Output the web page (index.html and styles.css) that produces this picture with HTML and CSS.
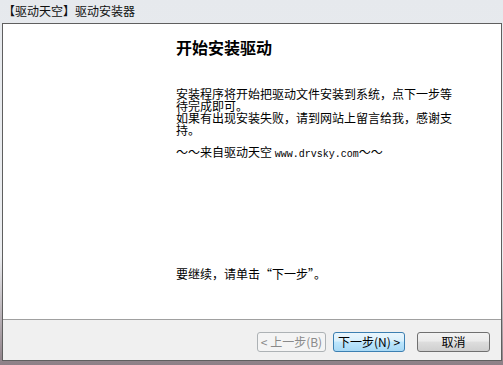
FILE: index.html
```html
<!DOCTYPE html>
<html lang="zh-CN">
<head>
  <meta charset="UTF-8">
  <title>【驱动天空】驱动安装器</title>
  <link rel="stylesheet" href="styles.css">
</head>
<body>
  <div class="window">
    <div class="titlebar">【驱动天空】驱动安装器</div>

    <div class="frame">
      <div class="content">
        <h1>开始安装驱动</h1>
        <p class="intro">安装程序将开始把驱动文件安装到系统，点下一步等待完成即可。<br>如果有出现安装失败，请到网站上留言给我，感谢支持。</p>
        <p class="site">～～来自驱动天空 <span class="url">www.drvsky.com</span>～～</p>
        <p class="continue">要继续，请单击“下一步”。</p>
      </div>

      <div class="footer">
        <button class="btn btn-back" disabled>&lt; 上一步(B)</button>
        <button class="btn btn-next">下一步(N) &gt;</button>
        <button class="btn btn-cancel">取消</button>
      </div>
    </div>
  </div>
</body>
</html>
```

FILE: styles.css
```css
body {
  margin: 0;
  font-family: "Noto Sans CJK SC", "Liberation Sans", sans-serif;
  font-size: 12px;
  color: #000;
  background: linear-gradient(#e6e9ed, #eceef1 70%, #8d7f86);
  height: 365px;
  overflow: hidden;
}

.window {
  width: 503px;
}

.titlebar {
  height: 23px;
  line-height: 21px;
  padding-left: 3px;
  box-sizing: border-box;
  font-size: 12px;
  color: #111;
}

.frame {
  margin-left: 2px;
  width: 500px;
  box-sizing: border-box;
  border: 1px solid #5f5f5f;
  background: #fff;
}

.content {
  height: 295px;
  padding: 15px 0 0 173px;
  box-sizing: border-box;
}

.content h1 {
  margin: 0;
  font-size: 16px;
  line-height: 16px;
  font-weight: bold;
}

.content p {
  margin: 0;
  width: 280px;
  line-height: 12px;
}

.intro {
  padding-top: 33px;
}

.site {
  padding-top: 10px;
}

.url {
  font-family: "Liberation Mono", monospace;
  font-size: 10px;
}

.continue {
  padding-top: 107px;
}

.footer {
  height: 41px;
  box-sizing: border-box;
  border-top: 1px solid #a0a0a0;
  background: #f0f0f0;
  display: flex;
  justify-content: flex-end;
  align-items: flex-start;
  padding: 12px 11px 0 0;
}

.btn {
  height: 20px;
  padding: 0;
  font-family: "Noto Sans CJK SC", sans-serif;
  font-size: 12px;
  line-height: 18px;
  border: 1px solid #707070;
  border-radius: 3px;
  background: linear-gradient(#f2f2f2, #ebebeb 45%, #dddddd 50%, #cfcfcf);
  color: #000;
}

.btn-back {
  width: 69px;
  margin-right: 7px;
  border-color: #adb2b5;
  background: #f4f4f4;
  color: #8a8a8a;
}

.btn-next {
  width: 72px;
  margin-right: 12px;
  border-color: #3c7fb1;
  background: linear-gradient(#eaf6fd, #d9f0fc 45%, #bee6fd 50%, #a7d9f5);
}

.btn-cancel {
  width: 73px;
}
```
